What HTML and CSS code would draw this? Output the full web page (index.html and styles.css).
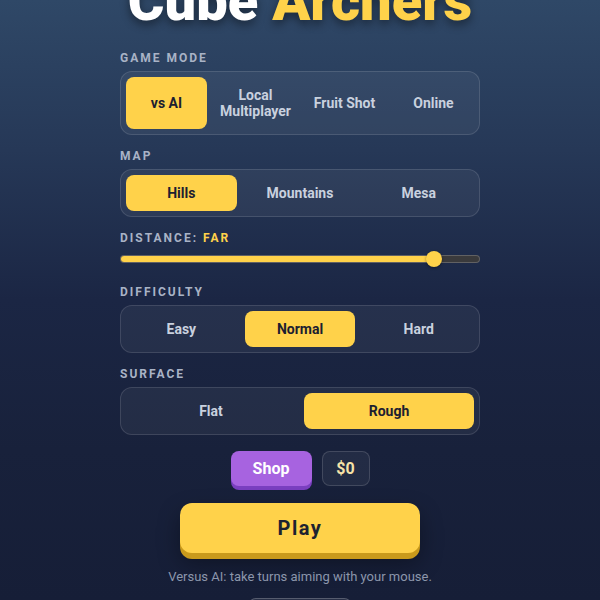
FILE: index.html
```html
<!DOCTYPE html>
<html lang="en">
<head>
<meta charset="utf-8">
<title>Cube Archers</title>
<link rel="stylesheet" href="styles.css">
</head>
<body>
<main class="menu">
  <h1 class="title">Cube <span class="accent">Archers</span></h1>

  <section class="field">
    <div class="label">Game Mode</div>
    <div class="seg seg-4 seg-tall">
      <button class="opt active">vs AI</button>
      <button class="opt">Local<br>Multiplayer</button>
      <button class="opt">Fruit Shot</button>
      <button class="opt">Online</button>
    </div>
  </section>

  <section class="field">
    <div class="label">Map</div>
    <div class="seg seg-3">
      <button class="opt active">Hills</button>
      <button class="opt">Mountains</button>
      <button class="opt">Mesa</button>
    </div>
  </section>

  <section class="field">
    <div class="label">Distance: <span class="value">Far</span></div>
    <div class="slider">
      <div class="track">
        <div class="fill" style="width: 87.2%"></div>
      </div>
      <div class="thumb" style="left: 87.2%"></div>
    </div>
  </section>

  <section class="field field-gap">
    <div class="label">Difficulty</div>
    <div class="seg seg-3">
      <button class="opt">Easy</button>
      <button class="opt active">Normal</button>
      <button class="opt">Hard</button>
    </div>
  </section>

  <section class="field">
    <div class="label">Surface</div>
    <div class="seg seg-2">
      <button class="opt">Flat</button>
      <button class="opt active">Rough</button>
    </div>
  </section>

  <div class="actions">
    <button class="shop">Shop</button>
    <div class="coins">$0</div>
  </div>

  <button class="play">Play</button>
  <p class="hint">Versus AI: take turns aiming with your mouse.</p>
  <button class="secondary">How to Play</button>
</main>
</body>
</html>
```

FILE: styles.css
```css
* {
  box-sizing: border-box;
}

html, body {
  margin: 0;
  height: 100%;
}

body {
  overflow: hidden;
  font-family: Roboto, "Liberation Sans", sans-serif;
  color: #c9d1df;
  background: linear-gradient(180deg, #2f4867 0%, #263857 25%, #1b2644 50%, #18213b 75%, #161e37 100%);
}

.menu {
  width: 360px;
  margin: -27px auto 0;
  display: flex;
  flex-direction: column;
  align-items: stretch;
}

.title {
  margin: 0 0 21px;
  font-size: 56px;
  line-height: 56px;
  font-weight: 900;
  text-align: center;
  color: #ffffff;
  text-shadow: 0 4px 10px rgba(0, 0, 0, 0.45);
}

.title .accent {
  color: #ffd24a;
}

.field + .field {
  margin-top: 13px;
}

.field.field-gap {
  margin-top: 17px;
}

.label {
  font-size: 12px;
  line-height: 16px;
  font-weight: 700;
  letter-spacing: 2px;
  text-transform: uppercase;
  color: #a9b3c6;
  margin-bottom: 5px;
}

.label .value {
  color: #ffd24a;
}

.seg {
  display: grid;
  gap: 8px;
  padding: 5px;
  border: 1px solid rgba(255, 255, 255, 0.12);
  border-radius: 12px;
  background: rgba(255, 255, 255, 0.05);
}

.seg-4 { grid-template-columns: repeat(4, 1fr); }
.seg-3 { grid-template-columns: repeat(3, 1fr); }
.seg-2 { grid-template-columns: repeat(2, 1fr); }

.opt {
  height: 36px;
  border: 0;
  border-radius: 8px;
  background: transparent;
  font-family: inherit;
  font-size: 14px;
  line-height: 16px;
  font-weight: 700;
  color: #c9d1df;
  padding: 0;
}

.seg-tall .opt {
  height: 52px;
}

.opt.active {
  background: #ffd24a;
  color: #1c2030;
}

.slider {
  position: relative;
  height: 16px;
  margin-top: 5px;
  display: flex;
  align-items: center;
}

.track {
  width: 100%;
  height: 8px;
  border-radius: 4px;
  background: #3a3a3c;
  border: 1px solid rgba(255, 255, 255, 0.2);
  overflow: hidden;
}

.fill {
  height: 100%;
  background: #ffd24a;
}

.thumb {
  position: absolute;
  top: 0;
  width: 16px;
  height: 16px;
  margin-left: -8px;
  border-radius: 50%;
  background: #ffd24a;
  box-shadow: 0 1px 3px rgba(0, 0, 0, 0.4);
}

.actions {
  margin-top: 16px;
  display: flex;
  justify-content: center;
  gap: 10px;
}

.shop {
  width: 81px;
  height: 35px;
  border: 0;
  border-radius: 8px;
  background: #a763e0;
  box-shadow: 0 4px 0 #7a3fc0;
  font-family: inherit;
  font-size: 16px;
  font-weight: 700;
  color: #ffffff;
}

.coins {
  width: 48px;
  height: 35px;
  display: flex;
  align-items: center;
  justify-content: center;
  border-radius: 8px;
  border: 1px solid rgba(255, 255, 255, 0.14);
  background: rgba(255, 255, 255, 0.05);
  font-size: 16px;
  font-weight: 700;
  color: #f6e3a8;
}

.play {
  align-self: center;
  width: 240px;
  height: 50px;
  margin-top: 17px;
  border: 0;
  border-radius: 12px;
  background: #ffd24a;
  box-shadow: 0 6px 0 #c99a1c, 0 10px 22px rgba(0, 0, 0, 0.35);
  font-family: inherit;
  font-size: 20px;
  font-weight: 700;
  letter-spacing: 1.5px;
  color: #1d2230;
}

.hint {
  margin: 15px 0 0;
  font-size: 13px;
  line-height: 18px;
  text-align: center;
  color: #8c96ab;
}

.secondary {
  align-self: center;
  width: 104px;
  height: 34px;
  margin-top: 12px;
  border: 1px solid rgba(255, 255, 255, 0.22);
  border-radius: 8px;
  background: rgba(255, 255, 255, 0.08);
  font-family: inherit;
  font-size: 13px;
  font-weight: 700;
  color: #c9d1df;
}
```
